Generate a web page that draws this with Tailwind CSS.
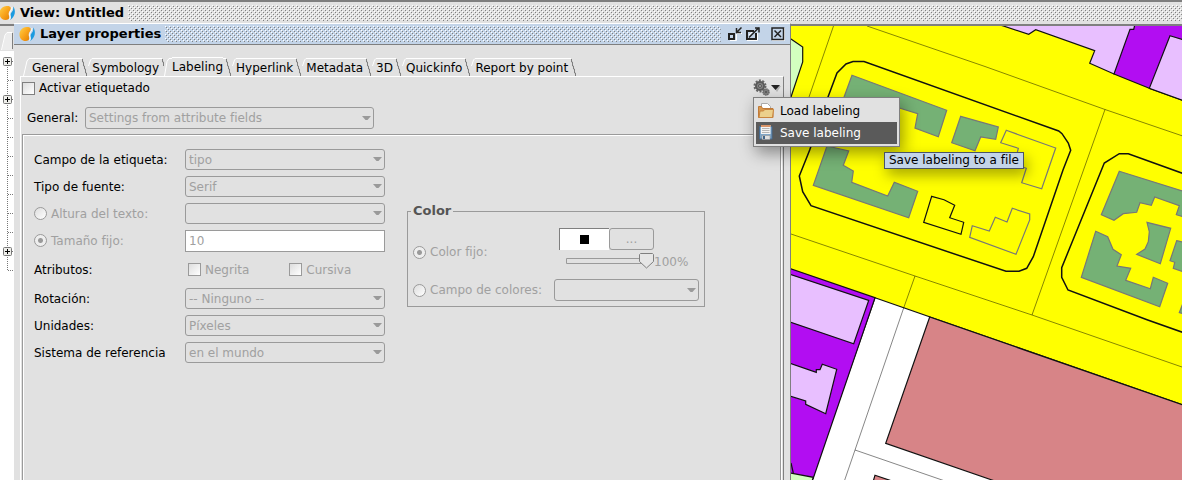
<!DOCTYPE html>
<html lang="es">
<head>
    <meta charset="UTF-8">
    <meta name="viewport" content="width=device-width, initial-scale=1.0">
    <title>View: Untitled</title>
    <script src="https://cdn.jsdelivr.net/npm/@tailwindcss/browser@4"></script>
</head>
<body class="flex min-h-screen flex-col overflow-hidden bg-[#e1e1e1] font-['DejaVu_Sans',sans-serif] text-[12px] leading-4 text-black">

    <!-- Shared shapes -->
    <svg class="absolute size-0" aria-hidden="true">
        <defs>
            <pattern id="bumps" width="4" height="4" patternUnits="userSpaceOnUse" shape-rendering="crispEdges">
                <path fill="#fff" d="M0 0h1v1H0zM2 2h1v1H2z"/>
                <path fill="#808080" d="M1 1h1v1H1zM3 3h1v1H3z"/>
            </pattern>
            <linearGradient id="orange" x1="0" y1="0" x2="1" y2="1">
                <stop offset="0" stop-color="#ffd24a"/>
                <stop offset=".5" stop-color="#f9a51c"/>
                <stop offset="1" stop-color="#e07b00"/>
            </linearGradient>
            <symbol id="logo" viewBox="0 0 16 16">
                <path fill="url(#orange)" d="M7.500 1C3 1.500 .5 4.500 .5 8.500c0 4 2.500 6.500 6 6.500 2.300 0 3.800-1 3.800-2.500.1-1.800-1-2.500-.6-4.500C10 6 12 5 11.700 2.800 11.500 1.300 9.500.8 7.500 1z"/>
                <path fill="#1a9be0" d="M14 1.500c2 2 2.500 6 1 9-1 2.200-2.500 3.800-4 4.500 1-1.500 1.200-2.500.8-4-.5-2 .2-3 1.200-4.200 1.200-1.500 1.500-3 1-5.300z"/>
                <path fill="none" stroke="#fff" d="M13 2c.2 3-2.500 4-2.500 7 0 2 1.200 3 .2 5.500"/>
            </symbol>
            <symbol id="arrow" viewBox="0 0 9 5">
                <path fill="#9a9a9a" d="M0 0h9L5.500 4h-2z"/>
            </symbol>
            <symbol id="tab-edge" viewBox="0 0 13 18">
                <path fill="none" stroke="#fff" d="M0 .5h3M9.500 8l2-6L13 .5"/>
                <path fill="none" stroke="#7f7f7f" d="M3.500 1v3h1v4h1v3h1v4h1v3"/>
            </symbol>
            <symbol id="tree-plus" viewBox="0 0 9 9">
                <rect x=".5" y=".5" width="8" height="8" rx="1" fill="#eeeeea" stroke="#777"/>
                <path stroke="#000" d="M2 4.500h5M4.500 2v5"/>
            </symbol>
        </defs>
    </svg>

    <!-- View title bar -->
    <header class="flex h-[23px] items-center border-t-2 border-[#7f7f7f] pt-px">
        <svg class="-ml-px size-4 shrink-0"><use href="#logo"/></svg>
        <h1 class="pr-1 pl-[5px] text-[13px] font-bold whitespace-nowrap">View: Untitled</h1>
        <svg class="h-4 min-w-0 flex-1"><rect width="100%" height="100%" fill="url(#bumps)"/></svg>
    </header>

    <main class="grid flex-1 grid-cols-[14px_777fr_391fr]">

        <!-- Layer tree -->
        <aside class="mt-px border-t-2 border-[#7f7f7f] bg-white">
            <svg class="block h-[250px] w-3.5" viewBox="0 26 14 250">
                <path fill="#e1e1e1" d="M0 26h14v25H0z"/>
                <path fill="#ececec" d="M2 50L5 36l2-3h5v17z"/>
                <path fill="none" stroke="#fff" d="M1.500 50L5 35l2-2.500h5"/>
                <path stroke="#7f7f7f" d="M12.500 33v16"/>
                <g stroke="#777" stroke-dasharray="1 1">
                    <path d="M7.500 57v214M8 80.500h6M8 118.500h6M8 137.500h6M8 156.500h6M8 175.500h6M8 194.500h6M8 213.500h6M8 232.500h6M8 270.500h6M12 61.500h2M12 99.500h2M12 251.500h2"/>
                </g>
                <use href="#tree-plus" x="3" y="57" width="9" height="9"/>
                <use href="#tree-plus" x="3" y="95" width="9" height="9"/>
                <use href="#tree-plus" x="3" y="247" width="9" height="9"/>
            </svg>
        </aside>

        <!-- Layer properties -->
        <section class="relative z-10 flex min-w-0 flex-col border-t border-r border-t-white border-r-[#7f7f7f] bg-[#e1e1e1]">
            <div class="flex h-[21px] items-center border-b border-[#7f7f7f] bg-[#c3d4e8] pr-[5px] pl-[5px]">
                <svg class="size-4 shrink-0"><use href="#logo"/></svg>
                <h2 class="pr-1 pl-[5px] text-[13px] font-bold whitespace-nowrap">Layer properties</h2>
                <svg class="mr-[7px] h-4 min-w-0 flex-1"><rect width="100%" height="100%" fill="url(#bumps)"/></svg>
                <div class="flex">
                    <button class="mr-1" aria-label="Minimize">
                        <svg class="block size-3.5" viewBox="0 0 14 14" fill="none">
                            <path stroke="#fff" d="M2 13.500h6.500V7M9 6.500h5"/>
                            <path stroke="#222" stroke-width="2" d="M1 7h5v5H1z"/>
                            <path stroke="#222" stroke-width="1.500" d="M13.500 .5L9 5M8.500 1v4.500H13"/>
                        </svg>
                    </button>
                    <button class="mr-[11px]" aria-label="Maximize">
                        <svg class="block size-3.5" viewBox="0 0 14 14" fill="none">
                            <path stroke="#fff" d="M1 13.500h10.500V6"/>
                            <path stroke="#222" stroke-width="2" d="M8 4H1v8h9V6"/>
                            <path stroke="#222" stroke-width="1.500" d="M3 10.500L13 .5M9 1h4v4.500"/>
                            <path stroke="#fff" d="M3 8l3-3"/>
                        </svg>
                    </button>
                    <button aria-label="Close">
                        <svg class="block size-3.5" viewBox="0 0 14 14" fill="none">
                            <path stroke="#fff" d="M1 13.500h12.500V1"/>
                            <path stroke="#222" stroke-width="1.500" d="M1 1h11.500v11.500H1z"/>
                            <path stroke="#222" stroke-width="1.500" d="M3.500 3.500l6.500 6.500M10 3.500L3.500 10"/>
                        </svg>
                    </button>
                </div>
            </div>

            <div class="flex flex-1 flex-col px-1.5 pt-[13px]">
                <div class="flex h-[18px] pl-[3px] whitespace-nowrap" role="tablist">
                    <svg class="h-[18px] w-[9px] shrink-0" viewBox="0 0 9 18"><path fill="none" stroke="#fff" d="M.5 18L4 3 6 .5h3"/></svg>
                    <button class="border-t border-white" role="tab">General</button>
                    <svg class="h-[18px] w-[13px] shrink-0"><use href="#tab-edge"/></svg>
                    <button class="border-t border-white" role="tab">Symbology</button>
                    <svg class="h-[18px] w-[13px] shrink-0" viewBox="0 0 13 18">
                        <path fill="none" stroke="#fff" d="M0 .5h3M5.500 18L8 3.500l2-3h3"/>
                        <path fill="none" stroke="#7f7f7f" d="M3.500 1v3h1v4"/>
                    </svg>
                    <button class="-mt-px border-t border-white" role="tab" aria-selected="true">Labeling</button>
                    <svg class="h-[18px] w-[13px] shrink-0"><use href="#tab-edge"/></svg>
                    <button class="border-t border-white" role="tab">Hyperlink</button>
                    <svg class="h-[18px] w-[13px] shrink-0"><use href="#tab-edge"/></svg>
                    <button class="border-t border-white" role="tab">Metadata</button>
                    <svg class="h-[18px] w-[13px] shrink-0"><use href="#tab-edge"/></svg>
                    <button class="border-t border-white" role="tab">3D</button>
                    <svg class="h-[18px] w-[13px] shrink-0"><use href="#tab-edge"/></svg>
                    <button class="border-t border-white" role="tab">Quickinfo</button>
                    <svg class="h-[18px] w-[13px] shrink-0"><use href="#tab-edge"/></svg>
                    <button class="border-t border-white" role="tab">Report by point</button>
                    <svg class="h-[18px] w-[13px] shrink-0" viewBox="0 0 13 18">
                        <path fill="none" stroke="#fff" d="M0 .5h3"/>
                        <path fill="none" stroke="#7f7f7f" d="M3.500 1v3h1v4h1v3h1v4h1v3"/>
                    </svg>
                </div>

                <div class="flex flex-1 flex-col border-t border-r border-l border-white border-r-[#7f7f7f] pr-0.5 pl-px">
                    <div class="flex h-[22px] items-center justify-between">
                        <label class="flex items-center gap-1">
                            <input type="checkbox" class="size-[13px] appearance-none border border-[#7f7f7f] bg-linear-to-br from-[#ddd] to-white">
                            Activar etiquetado
                        </label>
                        <div class="relative">
                            <button class="block" aria-label="Labeling options">
                                <svg class="block h-[18px] w-7" viewBox="0 0 28 18">
                                    <circle cx="7" cy="7" r="5.500" fill="none" stroke="#666" stroke-width="2" stroke-dasharray="2 1.450"/>
                                    <circle cx="7" cy="7" r="4" fill="#858585" stroke="#5a5a5a" stroke-width="2"/>
                                    <circle cx="7" cy="7" r="1.500" fill="#aaa" stroke="#555"/>
                                    <circle cx="13" cy="13" r="3" fill="#808080" stroke="#6a6a6a" stroke-width="1.500" stroke-dasharray="1.500 .5"/>
                                    <circle cx="13" cy="13" r="1" fill="#555"/>
                                    <path fill="#b5b5b5" d="M20 7h8l-4 6z"/>
                                    <path fill="#222" d="M18 6h9l-4.500 5z"/>
                                </svg>
                            </button>
                            <div class="absolute top-full left-0 w-[147px] border border-[#7f7f7f] bg-[#e1e1e1] p-0.5 shadow-[3px_6px_16px_rgba(0,0,0,0.4)]" role="menu">
                                <button class="flex h-[22px] w-full items-center gap-1.5 pl-0.5 whitespace-nowrap" role="menuitem">
                                    <svg class="size-4 shrink-0" viewBox="0 0 16 16">
                                        <path fill="#fff" stroke="#aaa" d="M3.500 6V.5h6l3 3V6z"/>
                                        <path fill="#d99a50" stroke="#c07a38" d="M.5 14.500V3.500h3l1 2h10.500v9z"/>
                                        <path fill="#ecd08c" stroke="#c8853f" d="M1 14.500L2 8h3.500l1-1.500h9l-1 8z"/>
                                    </svg>
                                    Load labeling
                                </button>
                                <button class="relative flex h-[22px] w-full items-center gap-1.5 bg-[#5a5a5a] pl-0.5 whitespace-nowrap text-white" role="menuitem" aria-describedby="save-tip">
                                    <svg class="size-4 shrink-0" viewBox="0 0 16 16">
                                        <path fill="#7fa6c8" stroke="#47698c" d="M1.500 1.500h12.500v12.500H1.500z"/>
                                        <path fill="#f4f4f4" d="M3 0h9.500v9H3z"/>
                                        <path fill="#d99468" d="M3 0h9.500v2H3z"/>
                                        <path stroke="#b5b5b5" d="M4 3.500h7.500M4 5.500h7.500M4 7.500h7.500"/>
                                        <path fill="#e0e0e0" stroke="#888" stroke-width=".5" d="M4 10.500h8v4H4z"/>
                                        <path fill="#446688" d="M5 11h2v3H5z"/>
                                    </svg>
                                    Save labeling
                                    <span id="save-tip" role="tooltip" class="absolute top-[30px] left-32 h-[17px] border border-[#4a5566] bg-[#c3d4e8] px-1 leading-[15px] text-black shadow-[3px_6px_14px_rgba(0,0,0,0.35)]">Save labeling to a file</span>
                                </button>
                            </div>
                        </div>
                    </div>

                    <div class="mt-2 flex h-[22px] items-center pl-[5px]">
                        <label for="mode" class="w-[58px]">General:</label>
                        <div class="relative">
                            <select id="mode" disabled class="block h-[22px] w-[289px] appearance-none rounded-[3px] border border-[#9a9a9a] pl-[3px] text-[#a0a0a0] opacity-100">
                                <option>Settings from attribute fields</option>
                            </select>
                            <svg class="pointer-events-none absolute top-[9px] right-[3px] h-[5px] w-[9px]"><use href="#arrow"/></svg>
                        </div>
                    </div>

                    <div class="mt-[5px] flex flex-1 border border-b-0 border-[#9a9a9a] shadow-[inset_1px_1px_0_#fff,1px_0_0_#fff]">
                        <form class="flex w-full gap-[22px] pt-[11px] pl-[11px] text-[#a0a0a0]">

                            <!-- Label fields -->
                            <div class="grid shrink-0 auto-rows-[27px] grid-cols-[151px_200px] content-start items-center">
                                <label for="field" class="text-black">Campo de la etiqueta:</label>
                                <div class="relative">
                                    <select id="field" disabled class="block h-[21px] w-full appearance-none rounded-[3px] border border-[#9a9a9a] pl-[3px] text-[#a0a0a0] opacity-100"><option>tipo</option></select>
                                    <svg class="pointer-events-none absolute top-2 right-[3px] h-[5px] w-[9px]"><use href="#arrow"/></svg>
                                </div>

                                <label for="font" class="text-black">Tipo de fuente:</label>
                                <div class="relative">
                                    <select id="font" disabled class="block h-[21px] w-full appearance-none rounded-[3px] border border-[#9a9a9a] pl-[3px] text-[#a0a0a0] opacity-100"><option>Serif</option></select>
                                    <svg class="pointer-events-none absolute top-2 right-[3px] h-[5px] w-[9px]"><use href="#arrow"/></svg>
                                </div>

                                <label class="flex items-center gap-1">
                                    <input type="radio" name="size" disabled class="size-[13px] appearance-none rounded-full border border-[#9a9a9a] bg-linear-to-br from-[#ddd] to-white">
                                    Altura del texto:
                                </label>
                                <div class="relative">
                                    <select aria-label="Altura del texto" disabled class="block h-[21px] w-full appearance-none rounded-[3px] border border-[#9a9a9a] opacity-100"><option></option></select>
                                    <svg class="pointer-events-none absolute top-2 right-[3px] h-[5px] w-[9px]"><use href="#arrow"/></svg>
                                </div>

                                <label class="flex items-center gap-1">
                                    <input type="radio" name="size" checked disabled class="size-[13px] appearance-none rounded-full border border-[#9a9a9a] bg-[radial-gradient(circle,#9a9a9a_2px,#eee_3px)]">
                                    Tamaño fijo:
                                </label>
                                <input type="text" aria-label="Tamaño fijo" value="10" disabled class="h-[22px] w-full border border-[#9a9a9a] bg-white pl-[3px] text-[#a0a0a0]">

                                <span class="pt-1 text-black">Atributos:</span>
                                <div class="flex gap-10 pt-1 pl-[3px]">
                                    <label class="flex items-center gap-1">
                                        <input type="checkbox" disabled class="size-[13px] appearance-none border border-[#9a9a9a] bg-linear-to-br from-[#ddd] to-white">
                                        Negrita
                                    </label>
                                    <label class="flex items-center gap-1">
                                        <input type="checkbox" disabled class="size-[13px] appearance-none border border-[#9a9a9a] bg-linear-to-br from-[#ddd] to-white">
                                        Cursiva
                                    </label>
                                </div>

                                <label for="rotation" class="mt-1 self-start pt-1.5 text-black">Rotación:</label>
                                <div class="relative mt-1 self-start pt-[3px]">
                                    <select id="rotation" disabled class="block h-[21px] w-full appearance-none rounded-[3px] border border-[#9a9a9a] pl-[3px] text-[#a0a0a0] opacity-100"><option>-- Ninguno --</option></select>
                                    <svg class="pointer-events-none absolute top-[11px] right-[3px] h-[5px] w-[9px]"><use href="#arrow"/></svg>
                                </div>

                                <label for="units" class="mt-1 self-start pt-1.5 text-black">Unidades:</label>
                                <div class="relative mt-1 self-start pt-[3px]">
                                    <select id="units" disabled class="block h-[21px] w-full appearance-none rounded-[3px] border border-[#9a9a9a] pl-[3px] text-[#a0a0a0] opacity-100"><option>Píxeles</option></select>
                                    <svg class="pointer-events-none absolute top-[11px] right-[3px] h-[5px] w-[9px]"><use href="#arrow"/></svg>
                                </div>

                                <label for="reference" class="mt-1 self-start pt-1.5 whitespace-nowrap text-black">Sistema de referencia</label>
                                <div class="relative mt-1 self-start pt-[3px]">
                                    <select id="reference" disabled class="block h-[21px] w-full appearance-none rounded-[3px] border border-[#9a9a9a] pl-[3px] text-[#a0a0a0] opacity-100"><option>en el mundo</option></select>
                                    <svg class="pointer-events-none absolute top-[11px] right-[3px] h-[5px] w-[9px]"><use href="#arrow"/></svg>
                                </div>
                            </div>

                            <!-- Colour -->
                            <fieldset class="mt-[57px] h-[104px] w-[298px] shrink-0 border border-[#9a9a9a] px-[5px]">
                                <legend class="-ml-0.5 px-0.5 text-[13px] font-bold text-[#555]">Color</legend>
                                <div class="flex items-center justify-between pt-[9px]">
                                    <label class="flex items-center gap-1 pt-1">
                                        <input type="radio" name="color" checked disabled class="size-[13px] appearance-none rounded-full border border-[#9a9a9a] bg-[radial-gradient(circle,#9a9a9a_2px,#eee_3px)]">
                                        Color fijo:
                                    </label>
                                    <div class="w-[140px]">
                                        <div class="flex h-[22px]">
                                            <div class="flex w-[50px] items-center justify-center border-t border-l border-[#7f7f7f] bg-white"><span class="size-[9px] bg-black"></span></div>
                                            <button type="button" disabled class="w-[45px] rounded-[3px] border border-[#9a9a9a]">...</button>
                                        </div>
                                        <div class="flex h-[22px] items-center pl-[7px]">
                                            <div class="relative h-[18px] w-[88px] shrink-0">
                                                <svg class="block h-[18px] w-[88px]" viewBox="0 0 88 18">
                                                    <path fill="#e1e1e1" stroke="#9a9a9a" d="M.5 6.500h85v5H.5z"/>
                                                    <path fill="#e6e6e6" stroke="#7f7f7f" d="M73.500 2.500l1-1h12l1 1v7l-7 6.500-7-6.500z"/>
                                                </svg>
                                                <input type="range" aria-label="Opacidad" value="100" disabled class="absolute inset-0 w-full opacity-0">
                                            </div>
                                            <span class="pt-0.5">100%</span>
                                        </div>
                                    </div>
                                </div>
                                <div class="flex items-center justify-between pt-[7px]">
                                    <label class="flex items-center gap-1">
                                        <input type="radio" name="color" disabled class="size-[13px] appearance-none rounded-full border border-[#9a9a9a] bg-linear-to-br from-[#ddd] to-white">
                                        Campo de colores:
                                    </label>
                                    <div class="relative">
                                        <select aria-label="Campo de colores" disabled class="block h-[22px] w-[145px] appearance-none rounded-[3px] border border-[#9a9a9a] opacity-100"><option></option></select>
                                        <svg class="pointer-events-none absolute top-[9px] right-[3px] h-[5px] w-[9px]"><use href="#arrow"/></svg>
                                    </div>
                                </div>
                            </fieldset>
                        </form>
                    </div>
                </div>
            </div>
        </section>

        <!-- Map -->
        <div class="relative mt-px border-t-2 border-[#7f7f7f] bg-[#ff0]">
            <svg class="absolute inset-0 size-full" viewBox="791 26 391 454" preserveAspectRatio="xMinYMin slice">
                <!-- land parcels -->
                <g stroke="#111" stroke-width="1.200">
                    <path fill="#fff" d="M875 297.700L1190 407.500V490H808z"/>
                    <path fill="#b20df2" d="M780 265L875 297.700 813 479 780 490z"/>
                    <path fill="#e8bfff" d="M780 271l88.700 29.500L853.700 343.700 780 318.500zM780 360l36.300 12.300v-2.600h3.700l2.300-5.400 14.400 5L825.700 413.700l-20-9.400V401L780 393z"/>
                    <path fill="#d3ffbf" d="M780 471l33.300 6.300-3 9H780zM780 31l11 8 11.700 8v15L791 97l-11 33z"/>
                    <path fill="none" d="M791 463l2.300 10"/>
                    <path fill="#d78487" d="M929.700 317L1190 407.500V490h-170l-28-10L885.700 443.300zM875 475.300L895 482h-22z"/>
                    <path fill="#b20df2" d="M1114 74l35.300 14.300L1190 103V15h-70z"/>
                    <path fill="#e8bfff" d="M985 20l18.300 6 25.400 8.300 7-4.600 59 21-5 12.600L1114 74l16-44.700h3.700L1136 20zM1170 35.700l20 6V103l-40.700-14.700z"/>
                </g>

                <!-- street axes -->
                <g fill="none" stroke="#000" stroke-opacity=".6" stroke-width=".8">
                    <path d="M833.500 26L809 97 792 147M867 26L985 66.500 1105 109.500 1190 138.500M1105 109.500L1032 315M791 234l124 42 117 39 150 52M915 276L904 307 855 450 843 485M855 450l90 31"/>
                </g>

                <!-- blocks -->
                <g fill="none" stroke="#111" stroke-width="1.500">
                    <path d="M828 97l9-24 9-9 7-2.500h11L1058.700 131l3.300 2.700 6.300 9.300 2.400 7.300L1063 170 1033.300 256.700l-6.600 11.600-7.700 3h-13L811 205.700l-8.300-14-3.400-15.700L809.700 150z"/>
                    <path d="M1190 176L1128.300 153.700h-9L1104.300 163 1061.700 267.700v9.600L1068 290l79.700 30 42.300 15"/>
                    <path stroke-width="1.200" d="M931.700 196.300l12.300 3.400 10.700 5.600-5 12.400 14 4.600-2.700 12-37.300-12z"/>
                </g>

                <!-- buildings -->
                <g fill="#75b175" stroke="#777" stroke-width="1.200">
                    <path d="M852 75.300l94.700 35-8.400 26.400L915 128l2.700-14.300L899.300 108 862 98l-18-.7z"/>
                    <path d="M827 146l21.700 5-5.400 14.300 10 5.700-1.600 11.300 36 13.700 6.600-13.700 23.400 9-9 26.400L813.300 185.300z"/>
                    <path d="M960.700 116.300L998.300 127l-2.600 12.300-15-2.300-5.700 13.700-23.300-8z"/>
                    <path d="M1119.300 171.300l70.700 22V219l-13.700-4.300 3-9-24.600-8.700-3.400 8.300-11.300-2.600-3.300 9.600-13.400 1.400-9.300 6.600-12.700-5.600z"/>
                    <path d="M1095.700 231.300l12 5.400 5.300 12.600 8.300 5.400-4.300 11.300 13.700 2.300-5 12 24.600 8.400 3-11.400 14.400 6-8 23.400L1081.300 277.300z"/>
                    <path d="M1147 222.300l23.700 6-10.400 35.400-23.600-9.400 8.300-5.300 3.300-7.300 1-10z"/>
                    <path d="M1176.700 240.700l13.300 3V274l-16.700-5.700 1.400-6-4.700-1.600zM1190 285l-10.700 27.700 10.700 3z"/>
                    <g fill="none">
                        <path d="M1006.300 130.300l49.400 17.700-14 40.700-20-6 4.600-14.400-12-4.300 4-15.700-17.600-5.600z"/>
                        <path d="M972.300 225.700l17 5.300 6-13.700 11.700 4.700 5.300-13.700 17.400 5.700v6L1016 254.300l-46.300-17z"/>
                    </g>
                </g>
            </svg>
        </div>
    </main>
</body>
</html>
